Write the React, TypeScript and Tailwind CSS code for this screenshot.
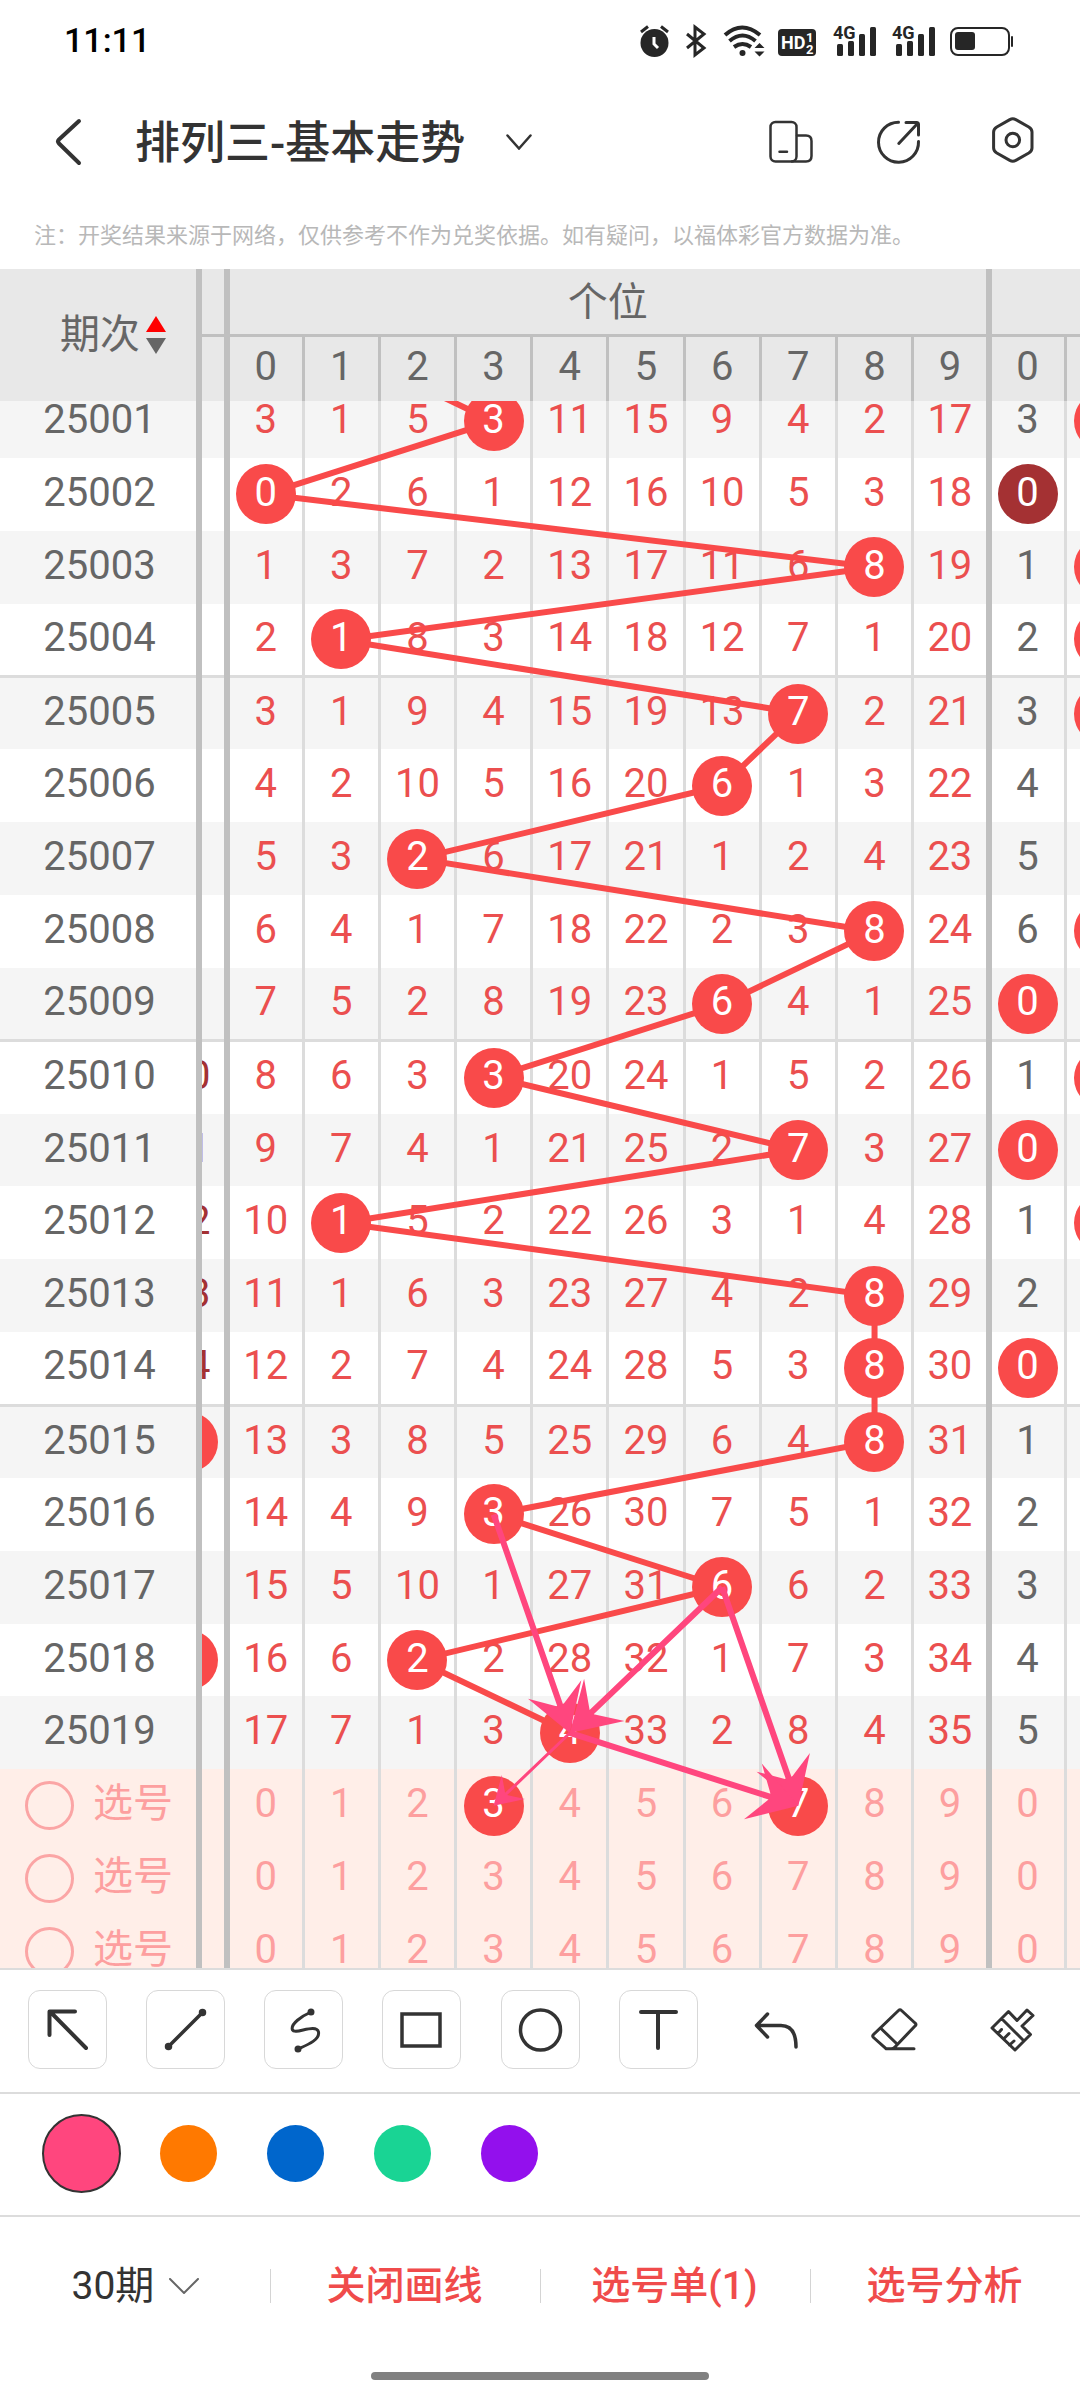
import { useState } from "react";
import clsx from "clsx";

const DIGITS = [0, 1, 2, 3, 4, 5, 6, 7, 8, 9];

const DRAWS = [3, 0, 8, 1, 7, 6, 2, 8, 6, 3, 7, 1, 8, 8, 8, 3, 6, 2, 4];
const FIRST_MISSES = [3, 1, 5, 0, 11, 15, 9, 4, 2, 17];

// neighbouring groups, only partly scrolled into view
const PREV_COL: Record<number, string> = { 9: "10", 10: "11", 11: "12", 12: "13", 13: "14", 14: "hit", 17: "hit" };
const NEXT_COL = [3, 0, 1, 2, 3, 4, 5, 6, 0, 1, 0, 1, 2, 0, 1, 2, 3, 4, 5];
const NEXT_EDGE_HITS = [0, 2, 3, 4, 7, 9, 11];

const COLORS = [
  { name: "粉色", cls: "bg-[#ff467e]" },
  { name: "橙色", cls: "bg-[#ff7900]" },
  { name: "蓝色", cls: "bg-[#0066cc]" },
  { name: "绿色", cls: "bg-[#19d494]" },
  { name: "紫色", cls: "bg-[#9310ed]" },
];

type Point = [number, number]; // [column, row]
type Arrow = { from: Point; to: Point; size: number; width: number };

const ARROWS: Arrow[] = [
  { from: [3, 15], to: [4, 18], size: 54, width: 6 },
  { from: [6, 16], to: [4, 18], size: 56, width: 6 },
  { from: [6, 16], to: [7, 19], size: 54, width: 6 },
  { from: [4, 18], to: [7, 19], size: 56, width: 6 },
  { from: [4, 18], to: [3, 19], size: 32, width: 3 },
];

const BODY_W = 1080;
const BODY_H = 1603;
const ROWS = 22;

function center([col, row]: Point): Point {
  return [227 + (838 / 11) * (col + 0.5), (BODY_H / ROWS) * (row + 0.5)];
}

function buildRows() {
  let misses = FIRST_MISSES;
  return DRAWS.map((hit, i) => {
    if (i > 0) misses = misses.map((m) => m + 1);
    misses = misses.map((m, d) => (d === hit ? 0 : m));
    return { id: String(25001 + i), hit, misses };
  });
}

const rows = buildRows();

function arrowPath({ from, to, size, width }: Arrow) {
  const [x1, y1] = center(from);
  const [x2, y2] = center(to);
  const back = Math.atan2(y1 - y2, x1 - x2);
  const at = (angle: number, r: number) => [x2 + Math.cos(back + angle) * r, y2 + Math.sin(back + angle) * r];
  const nx = (-Math.sin(back) * width) / 2;
  const ny = (Math.cos(back) * width) / 2;
  const [kx, ky] = at(0, size * 0.54);
  const pts = [
    [x2, y2],
    at(0.55, size),
    [kx + nx, ky + ny],
    [x1 + nx, y1 + ny],
    [x1 - nx, y1 - ny],
    [kx - nx, ky - ny],
    at(-0.55, size),
  ];
  return "M" + pts.map((p) => p.map((v) => v.toFixed(1)).join(" ")).join("L") + "Z";
}

function Num({ children, ball, dark }: { children?: React.ReactNode; ball?: boolean; dark?: boolean }) {
  return (
    <span
      className={clsx(
        "flex size-[60px] shrink-0 items-center justify-center rounded-full pb-[3px] leading-none",
        ball && "relative z-20 text-white",
        ball && (dark ? "bg-[#a43133]" : "bg-[#f94a4a]")
      )}
    >
      {children}
    </span>
  );
}

function Columns() {
  return (
    <colgroup>
      <col className="w-[199px]" />
      <col className="w-[28px]" />
      {DIGITS.map((d) => (
        <col key={d} />
      ))}
      <col />
      <col className="w-[15px]" />
    </colgroup>
  );
}

function StatusBar() {
  return (
    <div className="flex h-[82px] shrink-0 items-center justify-between pb-[2px] pl-[64px] pr-[64px]">
      <span className="text-[34px] font-medium leading-none text-black">11:11</span>
      <svg viewBox="638 20 378 38" className="h-[38px] w-[378px]" fill="#262626" aria-hidden="true">
        {/* alarm */}
        <circle cx="654.5" cy="42" r="14" />
        <path d="M641 31l7-5.500M668 31l-7-5.500" stroke="#262626" strokeWidth="3" />
        <path d="M654 36v7l4 4" stroke="#fff" strokeWidth="3" fill="none" />
        {/* bluetooth */}
        <path d="M687 33l17 14-9 7V26l9 7-17 14" fill="none" stroke="#262626" strokeWidth="3" />
        {/* wifi */}
        <g fill="none" stroke="#262626" strokeWidth="4">
          <path d="M725 34q17-15 35 0" />
          <path d="M729.500 40q13-11 26 0" />
          <path d="M734 46q8.500-6 17 0" />
        </g>
        <circle cx="742.500" cy="52" r="3" />
        <path d="M754.500 47l5-5 5 5zM754.500 50.500l5 5 5-5z" />
        {/* HD */}
        <rect x="778" y="28" width="38" height="27" rx="4" />
        <g fill="#fff" fontFamily="Roboto" fontWeight="700">
          <text x="781" y="48" fontSize="18">HD</text>
          <text x="806" y="41" fontSize="13">1</text>
          <text x="806" y="53" fontSize="13">2</text>
        </g>
        {[833, 892].map((x) => (
          <g key={x}>
            <text x={x} y="38" fontSize="18" fontFamily="Roboto" fontWeight="700">4G</text>
            <rect x={x + 4} y="43" width="6" height="12" rx="1.500" />
            <rect x={x + 15} y="40" width="6" height="15" rx="1.500" />
            <rect x={x + 26} y="33" width="6" height="22" rx="1.500" />
            <rect x={x + 37} y="26" width="6" height="29" rx="1.500" />
          </g>
        ))}
        {/* battery */}
        <rect x="951" y="27" width="58" height="27" rx="7" fill="none" stroke="#262626" strokeWidth="2" />
        <rect x="955" y="31" width="20" height="18" rx="3" />
        <rect x="1011" y="35" width="2" height="11" rx="1" />
      </svg>
    </div>
  );
}

function NavBar() {
  return (
    <header className="flex h-[120px] shrink-0 items-center pl-[46px] pr-[42px]">
      <button aria-label="返回" className="mr-[39px]">
        <svg viewBox="0 0 50 50" className="size-[50px]" fill="none" stroke="#333" strokeWidth="4" strokeLinecap="round" strokeLinejoin="round">
          <path d="M33 4L13 22.500q-2 2 0 4L33 46" />
        </svg>
      </button>
      <label className="flex items-center gap-[40px]">
        <select aria-label="走势类型" className="appearance-none bg-transparent pt-[3px] text-[45px] font-medium leading-[60px] text-[#333]">
          <option>排列三-基本走势</option>
        </select>
        <svg viewBox="0 0 26 16" className="h-[16px] w-[26px]" fill="none" stroke="#333" strokeWidth="2.500" strokeLinecap="round">
          <path d="M1.500 1.500L13 14.500 24.500 1.500" />
        </svg>
      </label>
      <div className="ml-auto flex gap-[61px]">
        <button aria-label="分屏">
          <svg viewBox="766 117 50 50" className="size-[50px]" fill="none" stroke="#333" strokeWidth="2.500" strokeLinecap="round">
            <rect x="770.500" y="122" width="26" height="39.500" rx="5" />
            <path d="M797 135.500h9q5.500 0 5.500 5.500v15q0 5.500-5.500 5.500h-14M779.500 151.800h7.500" />
          </svg>
        </button>
        <button aria-label="分享">
          <svg viewBox="877 117 50 50" className="size-[50px] overflow-visible" fill="none" stroke="#333" strokeWidth="3" strokeLinecap="round" strokeLinejoin="round">
            <path d="M898.500 122.200A20 20 0 1 0 918.500 141.500M898.800 143.500L918 123M906 122.500h10.500q2 0 2 2v10.500" />
          </svg>
        </button>
        <button aria-label="设置">
          <svg viewBox="988 117 50 50" className="size-[50px]" fill="none" stroke="#333" strokeWidth="3" strokeLinejoin="round">
            <path d="M1009.800 119.600q3-1.600 6 0l13 7.400q3.200 2 3.200 5v16q0 3-3.200 5l-13 7.400q-3 1.600-6 0l-13-7.400q-3.200-2-3.200-5v-16q0-3 3.200-5z" />
            <circle cx="1012.800" cy="140" r="6.800" />
          </svg>
        </button>
      </div>
    </header>
  );
}

function BoardHead() {
  return (
    <table className="w-full shrink-0 table-fixed border-collapse bg-[#e8e8e8] text-[40px] leading-none text-[#666]">
      <Columns />
      <thead>
        <tr className="h-[66px]">
          <th rowSpan={2} className="border-r-[6px] border-[#c0c0c0] p-0 font-normal">
            <button className="flex items-center gap-[6px] pl-[60px]">
              <span>期次</span>
              <svg viewBox="0 0 20 38" className="h-[38px] w-[20px]" aria-hidden="true">
                <path d="M10 0l10 16H0z" fill="#f00" />
                <path d="M0 22h20L10 38z" fill="#666" />
              </svg>
            </button>
          </th>
          <th className="border-b-[3px] border-r-[6px] border-[#c0c0c0] p-0" />
          <th colSpan={10} className="border-b-[3px] border-r-[6px] border-[#c0c0c0] p-0 pt-[3px] font-normal">
            个位
          </th>
          <th colSpan={2} className="border-b-[3px] border-[#c0c0c0] p-0" />
        </tr>
        <tr className="h-[66px]">
          <th className="border-r-[6px] border-[#c0c0c0] p-0" />
          {DIGITS.map((d) => (
            <th
              key={d}
              className={clsx("border-[#c0c0c0] p-0 pb-[3px] font-normal", d === 9 ? "border-r-[6px]" : "border-r-[3px]")}
            >
              {d}
            </th>
          ))}
          <th className="border-r-[3px] border-[#c0c0c0] p-0 pb-[3px] font-normal">0</th>
          <th className="p-0" />
        </tr>
      </thead>
    </table>
  );
}

function BoardBody() {
  const [picked, setPicked] = useState<string[]>(["0-3", "0-7"]);

  function toggle(key: string) {
    setPicked((p) => (p.includes(key) ? p.filter((k) => k !== key) : [...p, key]));
  }

  const trend = [center([1, -1]), ...rows.map((r, i) => center([r.hit, i]))];

  return (
    <div className="relative -mt-4">
      <table className="h-[1603px] w-full table-fixed border-collapse text-[40px] text-[#eb4f4f]">
        <Columns />
        <tbody>
          {rows.map((r, i) => (
            <tr
              key={r.id}
              className={clsx(
                "h-[72px]",
                i % 2 === 0 ? "bg-[#f5f5f5]" : "bg-white",
                i % 5 === 3 && i < rows.length - 1 && "border-b-[3px] border-[#dcdcdc]"
              )}
            >
              <th className="border-r-[6px] border-r-[#c0c0c0] p-0 pb-[3px] pl-[3px] font-normal leading-none text-[#666]">{r.id}</th>
              <td className="border-r-[6px] border-r-[#c0c0c0] p-0 text-[#a43133]">
                <div className="flex h-[60px] justify-end overflow-hidden pr-[6px]">
                  {PREV_COL[i] && <Num ball={PREV_COL[i] === "hit"}>{PREV_COL[i] !== "hit" && PREV_COL[i]}</Num>}
                </div>
              </td>
              {DIGITS.map((d) => (
                <td key={d} className={clsx("p-0", d === 9 ? "border-r-[6px] border-r-[#c0c0c0]" : "border-r-[3px] border-r-[#dcdcdc]")}>
                  <div className="flex justify-center">
                    <Num ball={d === r.hit}>{d === r.hit ? d : r.misses[d]}</Num>
                  </div>
                </td>
              ))}
              <td className="border-r-[3px] border-r-[#dcdcdc] p-0 text-[#666]">
                <div className="flex justify-center">
                  <Num ball={NEXT_COL[i] === 0} dark={i === 1}>{NEXT_COL[i]}</Num>
                </div>
              </td>
              <td className="p-0">
                <div className="flex pl-[7px]">{NEXT_EDGE_HITS.includes(i) && <Num ball />}</div>
              </td>
            </tr>
          ))}
          {[0, 1, 2].map((n) => (
            <tr key={n} className="h-[72px] bg-[#ffeee8] text-[#fd9f9f]">
              <th className="border-r-[6px] border-r-[#c0c0c0] p-0 font-normal leading-none">
                <label className="flex items-center gap-[19px] pl-[25px]">
                  <input type="checkbox" className="size-[49px] appearance-none rounded-full border-[3px] border-[#fba5a5]" />
                  <span className="pb-[3px]">选号</span>
                </label>
              </th>
              <td className="border-r-[6px] border-r-[#c0c0c0] p-0" />
              {DIGITS.map((d) => (
                <td key={d} className={clsx("p-0", d === 9 ? "border-r-[6px] border-r-[#c0c0c0]" : "border-r-[3px] border-r-[#dcdcdc]")}>
                  <button className="flex w-full justify-center" onClick={() => toggle(`${n}-${d}`)}>
                    <Num ball={picked.includes(`${n}-${d}`)}>{d}</Num>
                  </button>
                </td>
              ))}
              <td className="border-r-[3px] border-r-[#dcdcdc] p-0">
                <button className="flex w-full justify-center">
                  <Num>0</Num>
                </button>
              </td>
              <td className="p-0" />
            </tr>
          ))}
        </tbody>
      </table>
      {/* trend line runs over the numbers but under the balls */}
      <svg
        viewBox={`0 0 ${BODY_W} ${BODY_H}`}
        preserveAspectRatio="none"
        className="pointer-events-none absolute inset-0 z-10 h-full w-full"
      >
        <polyline points={trend.map((p) => p.join(",")).join(" ")} fill="none" stroke="#f94a4a" strokeWidth="6" />
      </svg>
      <svg
        viewBox={`0 0 ${BODY_W} ${BODY_H}`}
        preserveAspectRatio="none"
        className="pointer-events-none absolute inset-0 z-30 h-full w-full"
      >
        {ARROWS.map((a, i) => (
          <path key={i} d={arrowPath(a)} fill="#ff467e" />
        ))}
      </svg>
    </div>
  );
}

const TOOLS = [
  { name: "箭头", framed: true, w: 4, icon: <path d="M58 58L22 21.500M47 21.500H21.500V45" /> },
  {
    name: "直线",
    framed: true,
    w: 3.5,
    icon: (
      <>
        <path d="M56.500 22.500L22.500 56.500" />
        <circle cx="56.500" cy="22.500" r="2" />
        <circle cx="22.500" cy="56.500" r="2" />
      </>
    ),
  },
  {
    name: "曲线",
    framed: true,
    w: 3,
    icon: (
      <>
        <path d="M47 22C38 26 26 34 28.500 40C31 45 52 33 54.500 42C56 50 43 55 34 59" />
        <circle cx="47" cy="22" r="2" />
        <circle cx="34" cy="59" r="2" />
      </>
    ),
  },
  { name: "矩形", framed: true, w: 3.5, icon: <path strokeLinejoin="miter" d="M20 24H58V56H20Z" /> },
  { name: "圆形", framed: true, w: 3.5, icon: <circle cx="39.500" cy="40" r="20" /> },
  { name: "文字", framed: true, w: 4, icon: <path d="M22 22H57M39 22V58" /> },
  { name: "撤销", framed: false, w: 3.5, icon: <path d="M30.500 24L19.500 35.500L30.500 47M20 35.500H44Q59 35.500 59 57" /> },
  {
    name: "橡皮擦",
    framed: false,
    w: 3,
    icon: <path d="M43.500 20.500Q45 19 46.500 20.500L60 33Q62 34.500 60 36L40 57Q38.500 58.700 36 58.700H31L18.500 47.500Q17 46 18.500 44.500ZM26 38.500L41 53M31 58.700H59" />,
  },
  {
    name: "清空",
    framed: false,
    w: 3,
    icon: (
      <path d="M35.500 21.500L44 30.500L54 20L60 25.500L49 36L57.500 44.500L42 60L19 38ZM29 29L50 50M25 43.500L28.500 39.500M30.500 49L36 43.500M36.500 55L41 51" />
    ),
  },
];

function Toolbar() {
  return (
    <div className="flex shrink-0 justify-between border-t-2 border-[#dcdcdc] px-7 pb-[23px] pt-[20px]">
      {TOOLS.map((t) => (
        <button
          key={t.name}
          aria-label={t.name}
          className={clsx("size-[79px] rounded-xl border", t.framed ? "border-[#d8d8d8]" : "border-transparent")}
        >
          <svg viewBox="1 1 77 77" className="size-[77px]" fill="none" stroke="#333" strokeWidth={t.w} strokeLinecap="round" strokeLinejoin="round">
            {t.icon}
          </svg>
        </button>
      ))}
    </div>
  );
}

function Palette() {
  const [color, setColor] = useState(0);
  return (
    <div className="flex h-[123px] shrink-0 items-center gap-[28px] border-t-2 border-[#dcdcdc] pb-[2px] pl-[42px]">
      {COLORS.map((c, i) => (
        <input
          key={c.name}
          type="radio"
          name="color"
          aria-label={c.name}
          checked={color === i}
          onChange={() => setColor(i)}
          className={clsx("appearance-none rounded-full", c.cls, color === i ? "size-[79px] border-2 border-[#333]" : "mx-[11px] size-[57px]")}
        />
      ))}
    </div>
  );
}

function BottomBar() {
  return (
    <footer className="shrink-0 border-t-2 border-[#dcdcdc]">
      <div className="grid h-[138px] grid-cols-4 items-center">
        <label className="flex items-center justify-center gap-[14px]">
          <select aria-label="期数" className="appearance-none bg-transparent text-[39px] leading-[56px] text-[#333]">
            <option>30期</option>
          </select>
          <svg viewBox="0 0 30 16" className="h-[16px] w-[30px]" fill="none" stroke="#666" strokeWidth="2" strokeLinecap="round">
            <path d="M1 1L15 15 29 1" />
          </svg>
        </label>
        {["关闭画线", "选号单(1)", "选号分析"].map((t) => (
          <div key={t} className="flex items-center">
            <span className="h-[34px] w-px bg-[#d4d4d4]" />
            <button className="w-full pr-[2px] text-center text-[39px] font-medium leading-[56px] text-[#f04b4b]">{t}</button>
          </div>
        ))}
      </div>
      <div className="flex h-[45px] justify-center pt-[17px]">
        <div className="h-2 w-[338px] rounded-full bg-[#808080]" />
      </div>
    </footer>
  );
}

export default function App() {
  return (
    <div className="flex h-screen flex-col overflow-hidden bg-white font-['Roboto','Noto_Sans_CJK_SC',sans-serif]">
      <StatusBar />
      <NavBar />
      <p className="h-[67px] shrink-0 whitespace-nowrap pl-[34px] text-[22px] leading-[67px] text-[#b8b8b8]">
        注：开奖结果来源于网络，仅供参考不作为兑奖依据。如有疑问，以福体彩官方数据为准。
      </p>
      <BoardHead />
      <div className="min-h-0 flex-1 overflow-hidden">
        <BoardBody />
      </div>
      <Toolbar />
      <Palette />
      <BottomBar />
    </div>
  );
}
